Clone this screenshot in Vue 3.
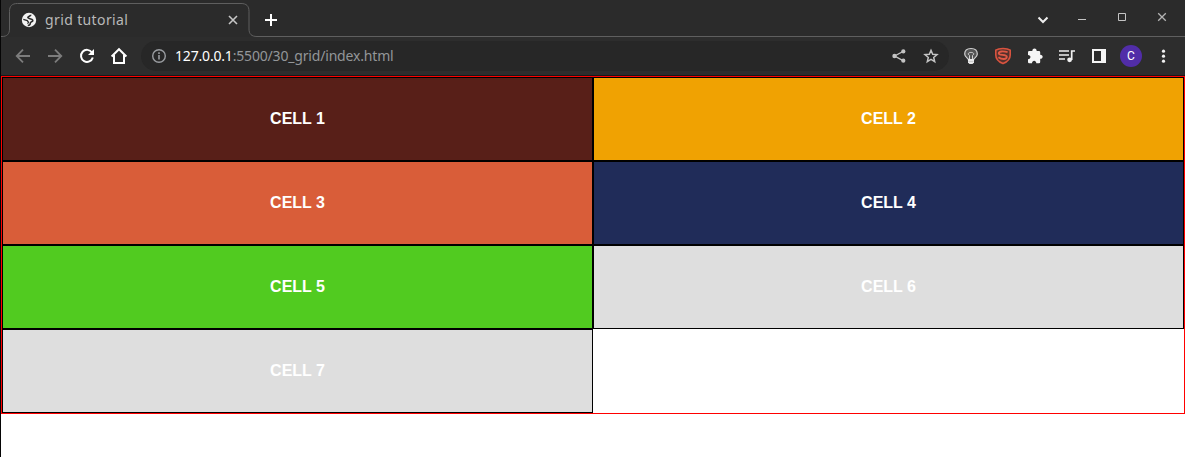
<script setup>
const cells = [
  { label: 'CELL 1', tone: 'maroon' },
  { label: 'CELL 2', tone: 'amber' },
  { label: 'CELL 3', tone: 'coral' },
  { label: 'CELL 4', tone: 'navy' },
  { label: 'CELL 5', tone: 'green' },
  { label: 'CELL 6', tone: 'grey' },
  { label: 'CELL 7', tone: 'grey' },
]
</script>

<template>
  <div class="window">
    <header class="tabstrip">
      <svg class="outline" width="1184" height="39" viewBox="0 0 1184 39" fill="none">
        <path d="M0 36.5H1C6 36.5 8.500 34 8.500 29V11.500C8.500 6 11 3.500 16.500 3.500H240C245.500 3.500 248 6 248 11.500V29C248 34 250.500 36.500 256 36.500H1184" stroke="#5f5f5f" />
      </svg>
      <div class="tab">
        <svg class="globe" width="16" height="16" viewBox="0 0 16 16" fill="none">
          <circle cx="8" cy="8" r="7.200" fill="#f3f3f3" />
          <path d="M9.800 2.700C9.800 4.300 6.800 4 6.800 5.600C6.800 7 11.200 6.300 11.800 8.200C12.300 10 9.300 9.600 9.300 11.200C9.300 12.500 8.300 13.500 6.800 13.300" stroke="#2b2b2b" stroke-width="1.600" />
          <path d="M2.300 7.300L6.300 8.600L7.500 10.300L6.500 11.600" stroke="#2b2b2b" stroke-width="1.300" />
        </svg>
        <span class="title">grid tutorial</span>
        <svg class="close" width="10" height="10" viewBox="0 0 10 10"><path d="M1 1L9 9M9 1L1 9" stroke="#c6c6c6" stroke-width="1.600" /></svg>
      </div>
      <svg class="plus" width="14" height="14" viewBox="0 0 14 14"><path d="M7 1V13M1 7H13" stroke="#fff" stroke-width="2" /></svg>
      <div class="controls">
        <svg width="40" height="30" viewBox="0 0 40 30" fill="none"><path d="M15.500 17.500L20 22L24.500 17.500" stroke="#eee" stroke-width="2" /></svg>
        <svg width="40" height="30" viewBox="0 0 40 30"><path d="M15 19.500H23" stroke="#c4c4c4" /></svg>
        <svg width="40" height="30" viewBox="0 0 40 30" fill="none"><path d="M15.500 13.500H22.500V20.500H15.500Z" stroke="#c4c4c4" /></svg>
        <svg width="40" height="30" viewBox="0 0 40 30"><path d="M15.200 13.200L22.800 20.800M22.800 13.200L15.200 20.800" stroke="#b4b4b4" stroke-width="1.300" /></svg>
      </div>
    </header>

    <nav class="toolbar">
      <svg class="ico" viewBox="0 0 20 20" fill="none" stroke="#7c7c7c" stroke-width="1.800"><path d="M17 10H4M10 3.700L3.700 10L10 16.300" /></svg>
      <svg class="ico" viewBox="0 0 20 20" fill="none" stroke="#7c7c7c" stroke-width="1.800"><path d="M3 10H16M10 3.700L16.300 10L10 16.300" /></svg>
      <svg class="ico" viewBox="0 0 20 20" fill="none" stroke="#fff" stroke-width="2"><path d="M15 6.500A6 6 0 1 0 15.800 11.500" /><path d="M17 3V9H11Z" fill="#fff" stroke="none" /></svg>
      <svg class="ico" viewBox="0 0 20 20" fill="none" stroke="#fff" stroke-width="2"><path d="M2.600 10.500L10 3.200L17.400 10.500M5 9V17H15V9" /></svg>

      <div class="omnibox">
        <svg class="info" width="16" height="16" viewBox="0 0 16 16" fill="none"><circle cx="8" cy="8" r="6.300" stroke="#9a9da1" stroke-width="1.400" /><path d="M8 7V11.500M8 4.300V5.900" stroke="#9a9da1" stroke-width="1.600" /></svg>
        <span class="url"><b>127.0.0.1</b>:5500/30_grid/index.html</span>
        <svg class="ico share" viewBox="0 0 20 20" fill="#c3c3c3"><path d="M14 5.500L5.700 10L14 14.700" fill="none" stroke="#c3c3c3" stroke-width="1.400" /><circle cx="14.300" cy="5.400" r="2.100" /><circle cx="5.500" cy="10" r="2.200" /><circle cx="14.300" cy="14.700" r="2.100" /></svg>
        <svg class="ico" viewBox="0 0 20 20" fill="none"><path d="M10 4.300L11.700 8.200L16 8.600L12.700 11.400L13.700 15.600L10 13.400L6.300 15.600L7.300 11.400L4 8.600L8.300 8.200Z" stroke="#c3c3c3" stroke-width="1.500" /></svg>
      </div>

      <svg class="ico bulb" viewBox="0 0 20 20" fill="none"><path d="M7.500 14C7.500 12 3.700 11.500 3.700 8C3.700 4.300 6.500 2.500 10 2.500S16.300 4.300 16.300 8C16.300 11.500 12.500 12 12.500 14Z" fill="#555" stroke="#d2d2d2" stroke-width="1.200" /><path d="M8.500 13V9.500L7.300 8.200C6.800 5.800 13.200 5.800 12.700 8.200L11.500 9.500V13" stroke="#d2d2d2" /><path d="M7 13H13V16.500L11.500 18H8.500L7 16.500Z" fill="#e8e8e8" /><path d="M7.500 15.500H12.500" stroke="#bbb" stroke-width=".7" /></svg>
      <svg class="ico" viewBox="0 0 20 20" fill="none"><path d="M10 2.500C13 2.500 15.500 3 17.200 4.200V9C17.200 13.500 14 16 10 17.600C6 16 2.800 13.500 2.800 9V4.200C4.500 3 7 2.500 10 2.500Z" fill="#56312c" stroke="#d9533f" stroke-width="1.600" /><path d="M14.600 6.200C10.500 5 5.800 5 5.800 7.500C5.800 9.700 13.800 8 13.800 10.800C13.800 13.600 9 13.800 5.400 11.200" stroke="#df5945" stroke-width="1.900" /></svg>
      <svg class="ico" viewBox="0 0 20 20"><path d="M3 6.200Q3 5 4.200 5H7.300C7.300 1.700 11.700 1.700 11.700 5H14Q15.200 5 15.200 6.200V8.700C18.500 8.700 18.500 12.800 15.200 12.800V16Q15.200 17.200 14 17.200H11.300C11.300 13.800 7 13.800 7 17.200H4.200Q3 17.200 3 16V13.200C6.300 13.200 6.300 9 3 9Z" fill="#f5f5f5" /></svg>
      <svg class="ico" viewBox="0 0 20 20" fill="none" stroke="#f1f1f1" stroke-width="1.700"><path d="M2 5H12M2 9H12M2 13H8M14.700 14V5H18" /><circle cx="12.600" cy="13.800" r="2.400" fill="#f1f1f1" stroke="none" /></svg>
      <svg class="ico" viewBox="0 0 20 20"><path fill-rule="evenodd" d="M3 3H17V17H3ZM5 5V15H12V5Z" fill="#f5f5f5" /></svg>
      <span class="avatar">C</span>
      <svg class="ico" viewBox="0 0 20 20" fill="#f1f1f1"><circle cx="10.500" cy="5.200" r="1.600" /><circle cx="10.500" cy="10.200" r="1.600" /><circle cx="10.500" cy="15.200" r="1.600" /></svg>
    </nav>

    <main class="grid">
      <div v-for="cell in cells" :key="cell.label" class="cell" :class="cell.tone">{{ cell.label }}</div>
    </main>
  </div>
</template>

<style>
body { margin: 0; background: #fff; }
</style>

<style scoped>
.window { box-sizing: border-box; width: 1185px; height: 457px; border-left: 1px solid #050505; background: #fff; overflow: hidden; }
.tabstrip { position: relative; display: flex; align-items: flex-start; height: 37px; background: #2b2b2b; }
.outline { position: absolute; left: 0; top: 0; }
.tab { display: flex; align-items: center; box-sizing: border-box; width: 240px; height: 34px; margin: 3px 0 0 8px; padding: 0 12px; }
.title { margin-left: 8px; font: 14px/20px "Noto Sans", sans-serif; letter-spacing: .38px; color: #b9b9b9; white-space: nowrap; }
.close { margin-left: auto; margin-right: -1px; }
.plus { margin: 13px 0 0 15px; }
.controls { display: flex; margin: 0 2px 0 auto; }
.toolbar { display: flex; align-items: center; box-sizing: border-box; height: 39px; padding: 0 0 1px 6px; background: #2d2d2d; border-bottom: 1px solid #1b1717; }
.ico { flex: none; width: 32px; height: 20px; }
.omnibox { display: flex; align-items: center; box-sizing: border-box; width: 808px; height: 30px; margin: 0 6px; padding: 0 2px 0 10px; border-radius: 15px; background: #272727; }
.url { margin-left: 8px; font: 14px/20px "Noto Sans", sans-serif; letter-spacing: -.18px; color: #939699; white-space: nowrap; }
.url b { font-weight: 400; color: #fff; }
.share { margin-left: auto; }
.avatar { flex: none; width: 22px; height: 22px; margin: 0 5px; border-radius: 50%; background: #512da8; color: #fff; font: 12px/22px Roboto, sans-serif; text-align: center; }
.grid { display: grid; grid-template-columns: 1fr 1fr; grid-auto-rows: 84px; border: 1px solid #f00; }
.cell { display: flex; align-items: center; justify-content: center; border: 1px solid #000; color: #fff; font: bold 16px/18px "Liberation Sans", Arial, sans-serif; }
.maroon { background: #581f18; }
.amber { background: #f0a202; }
.coral { background: #d95d39; }
.navy { background: #202c59; }
.green { background: #51cb20; }
.grey { background: #dedede; }
</style>
